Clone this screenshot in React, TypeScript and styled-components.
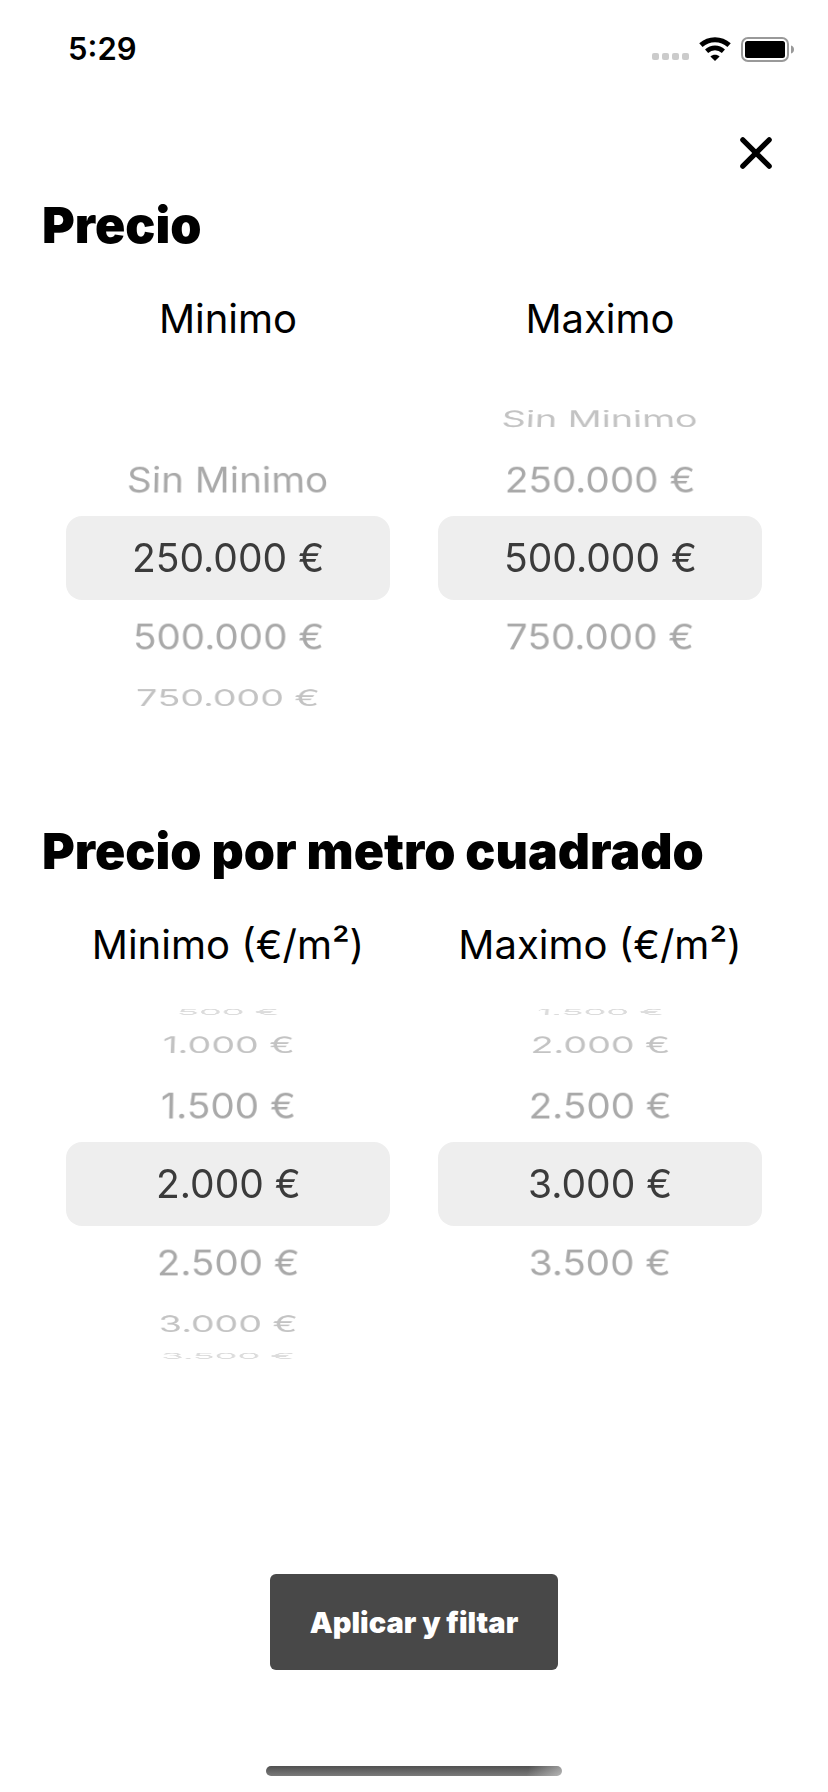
import React, { useId, useState } from 'react';
import styled, { createGlobalStyle } from 'styled-components';

const GlobalStyle = createGlobalStyle`
  *, *::before, *::after { box-sizing: border-box; }
  body {
    margin: 0;
    background: #fff;
    color: #000;
    font-family: Inter, "Liberation Sans", sans-serif;
  }
`;

const Screen = styled.div`
  display: flex;
  flex-direction: column;
  min-height: 100vh;
`;

const StatusBar = styled.div`
  display: flex;
  align-items: center;
  justify-content: space-between;
  height: 98px;
  padding: 0 34px 0 68px;
`;

const Clock = styled.time`
  font-size: 31px;
  font-weight: 600;
  line-height: 40px;
`;

const StatusIcons = styled.div`
  display: flex;
  align-items: center;
  gap: 10px;
`;

const Header = styled.header`
  display: flex;
  justify-content: flex-end;
  padding: 33px 50px 20px;
`;

const CloseButton = styled.button`
  display: flex;
  align-items: center;
  justify-content: center;
  width: 44px;
  height: 44px;
  padding: 0;
  border: 0;
  background: none;
  color: inherit;
  cursor: pointer;
`;

const Filters = styled.form`
  display: flex;
  flex-direction: column;
  flex: 1;
  gap: 83px;
`;

const Section = styled.section`
  display: flex;
  flex-direction: column;
  gap: 40px;
  padding: 0 42px;
`;

const Title = styled.h2`
  margin: 0;
  font-size: 50px;
  font-weight: 900;
  line-height: 60px;
`;

const Columns = styled.div`
  display: grid;
  grid-template-columns: 1fr 1fr;
`;

const Picker = styled.fieldset`
  min-width: 0;
  margin: 0;
  padding: 0;
  border: 0;
`;

const PickerLabel = styled.legend`
  width: 100%;
  padding: 0 0 35px;
  font-size: 40px;
  line-height: 48px;
  text-align: center;
`;

const Wheel = styled.div`
  display: grid;
  grid-template-rows: 16px 49px 73px 84px 73px 49px 16px;
  padding: 0 24px;
`;

const rowColors = ['#3b3b3b', '#a9a9a9', '#c3c3c3', '#dcdcdc'];
const rowAngles = [0, 26, 53, 77];
const rowDepths = [0, 18, 69, 142];

const Row = styled.label<{ $distance: number }>`
  grid-row: ${(p) => p.$distance + 4};
  display: flex;
  align-items: center;
  justify-content: center;
  min-height: 0;
  border-radius: 16px;
  background: ${(p) => (p.$distance === 0 ? '#eee' : 'none')};
  color: ${(p) => rowColors[Math.abs(p.$distance)]};
  font-size: 39px;
  line-height: 48px;
  white-space: nowrap;
  cursor: pointer;
`;

/* Each row lies on the surface of the drum: it tilts and recedes with distance. */
const RowText = styled.span<{ $distance: number }>`
  transform: perspective(1800px)
    translateZ(-${(p) => rowDepths[Math.abs(p.$distance)]}px)
    rotateX(${(p) => -Math.sign(p.$distance) * rowAngles[Math.abs(p.$distance)]}deg);
`;

const Radio = styled.input`
  appearance: none;
  width: 0;
  height: 0;
  margin: 0;
`;

const Footer = styled.footer`
  display: flex;
  flex-direction: column;
  align-items: center;
  gap: 96px;
  margin-top: auto;
  padding-bottom: 16px;
`;

const ApplyButton = styled.button`
  width: 288px;
  height: 96px;
  padding: 0;
  border: 0;
  border-radius: 6px;
  background: #484848;
  color: #fff;
  font-family: inherit;
  font-size: 29px;
  font-weight: 900;
  cursor: pointer;
`;

const HomeIndicator = styled.div`
  width: 296px;
  height: 10px;
  border-radius: 5px;
  background:
    linear-gradient(105deg, transparent 88%, rgba(255, 255, 255, 0.45) 100%),
    linear-gradient(#505050, #7a7a7a);
`;

function SignalDots() {
  return (
    <svg width="37" height="24" viewBox="0 0 37 24" aria-hidden="true">
      {[0, 10, 20, 30].map((x) => (
        <rect key={x} x={x} y="16" width="7" height="7" rx="2" fill="#cbcbcb" />
      ))}
    </svg>
  );
}

function WifiIcon() {
  return (
    <svg width="32" height="24" viewBox="0 0 32 24" aria-hidden="true">
      <path d="M1.9 8.2C10 1 22 1 30.100 8.200" fill="none" stroke="#000" strokeWidth="5" />
      <path d="M7.600 14.200C12.500 9.700 19.500 9.700 24.400 14.200" fill="none" stroke="#000" strokeWidth="4.600" />
      <path d="M16 24L11.400 19.500C13.800 17.100 18.200 17.100 20.600 19.500Z" fill="#000" />
    </svg>
  );
}

function BatteryIcon() {
  return (
    <svg width="53" height="25" viewBox="0 0 53 25" aria-hidden="true">
      <rect x="1" y="1" width="46" height="23" rx="6" fill="none" stroke="#999" strokeWidth="2" />
      <rect x="4" y="4" width="40" height="17" rx="2.500" fill="#000" />
      <path d="M50 8.500C52 9 53 10.500 53 12.500S52 16 50 16.500Z" fill="#999" />
    </svg>
  );
}

function CloseIcon() {
  return (
    <svg width="32" height="32" viewBox="0 0 32 32" aria-hidden="true">
      <path d="M2.800 2.800L29.200 29.200M29.200 2.800L2.800 29.200" stroke="#000" strokeWidth="5.200" strokeLinecap="round" />
    </svg>
  );
}

interface WheelPickerProps {
  label: string;
  options: string[];
  initial: number;
}

function WheelPicker({ label, options, initial }: WheelPickerProps) {
  const [selected, setSelected] = useState(initial);
  const name = useId();
  return (
    <Picker>
      <PickerLabel>{label}</PickerLabel>
      <Wheel>
        {options.map((option, index) => {
          const distance = index - selected;
          if (Math.abs(distance) > 3) return null;
          return (
            <Row key={option} $distance={distance}>
              <Radio type="radio" name={name} checked={distance === 0} onChange={() => setSelected(index)} />
              <RowText $distance={distance}>{option}</RowText>
            </Row>
          );
        })}
      </Wheel>
    </Picker>
  );
}

const prices = ['Sin Minimo', '250.000 €', '500.000 €', '750.000 €'];
const metrePrices = ['500 €', '1.000 €', '1.500 €', '2.000 €', '2.500 €', '3.000 €', '3.500 €'];

export default function App() {
  return (
    <Screen>
      <GlobalStyle />
      <StatusBar>
        <Clock>5:29</Clock>
        <StatusIcons>
          <SignalDots />
          <WifiIcon />
          <BatteryIcon />
        </StatusIcons>
      </StatusBar>
      <Header>
        <CloseButton type="button" aria-label="Cerrar">
          <CloseIcon />
        </CloseButton>
      </Header>
      <Filters onSubmit={(event) => event.preventDefault()}>
        <Section>
          <Title>Precio</Title>
          <Columns>
            <WheelPicker label="Minimo" options={prices} initial={1} />
            <WheelPicker label="Maximo" options={prices} initial={2} />
          </Columns>
        </Section>
        <Section>
          <Title>Precio por metro cuadrado</Title>
          <Columns>
            <WheelPicker label="Minimo (€/m²)" options={metrePrices} initial={3} />
            <WheelPicker label="Maximo (€/m²)" options={metrePrices} initial={5} />
          </Columns>
        </Section>
        <Footer>
          <ApplyButton type="submit">Aplicar y filtar</ApplyButton>
          <HomeIndicator />
        </Footer>
      </Filters>
    </Screen>
  );
}
